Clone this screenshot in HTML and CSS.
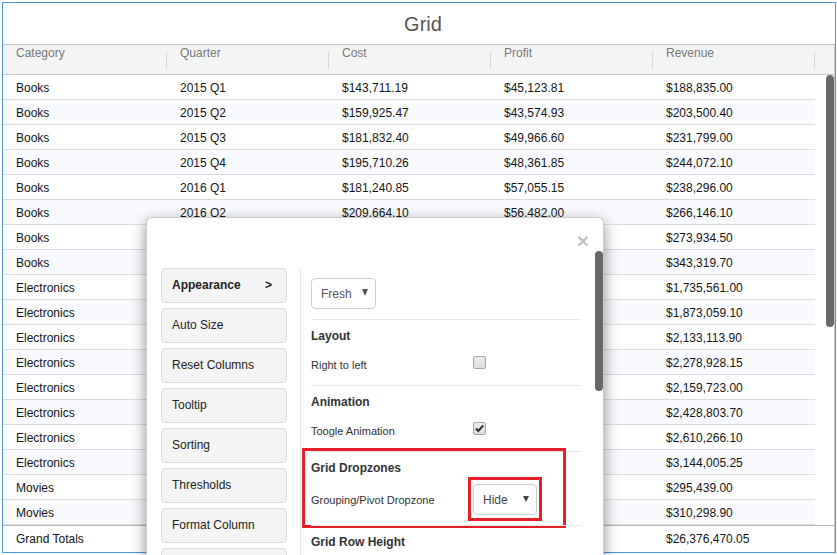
FILE: index.html
```html
<!DOCTYPE html>
<html>
<head>
<meta charset="utf-8">
<link rel="stylesheet" href="styles.css">
</head>
<body>
<div class="panel">
  <div class="title">Grid</div>
  <div class="grid">
    <div class="head">
      <div class="hcell c1">Category</div>
      <div class="hcell">Quarter</div>
      <div class="hcell">Cost</div>
      <div class="hcell">Profit</div>
      <div class="hcell">Revenue</div>
      <div class="hgut"></div>
    </div>
    <div class="body">
      <div class="rows">
        <div class="row"><div class="cell c1">Books</div><div class="cell">2015 Q1</div><div class="cell">$143,711.19</div><div class="cell">$45,123.81</div><div class="cell">$188,835.00</div></div>
        <div class="row"><div class="cell c1">Books</div><div class="cell">2015 Q2</div><div class="cell">$159,925.47</div><div class="cell">$43,574.93</div><div class="cell">$203,500.40</div></div>
        <div class="row"><div class="cell c1">Books</div><div class="cell">2015 Q3</div><div class="cell">$181,832.40</div><div class="cell">$49,966.60</div><div class="cell">$231,799.00</div></div>
        <div class="row"><div class="cell c1">Books</div><div class="cell">2015 Q4</div><div class="cell">$195,710.26</div><div class="cell">$48,361.85</div><div class="cell">$244,072.10</div></div>
        <div class="row"><div class="cell c1">Books</div><div class="cell">2016 Q1</div><div class="cell">$181,240.85</div><div class="cell">$57,055.15</div><div class="cell">$238,296.00</div></div>
        <div class="row"><div class="cell c1">Books</div><div class="cell">2016 Q2</div><div class="cell">$209,664.10</div><div class="cell">$56,482.00</div><div class="cell">$266,146.10</div></div>
        <div class="row"><div class="cell c1">Books</div><div class="cell">2016 Q3</div><div class="cell">$214,212.30</div><div class="cell">$59,722.20</div><div class="cell">$273,934.50</div></div>
        <div class="row"><div class="cell c1">Books</div><div class="cell">2016 Q4</div><div class="cell">$268,514.10</div><div class="cell">$74,805.60</div><div class="cell">$343,319.70</div></div>
        <div class="row"><div class="cell c1">Electronics</div><div class="cell">2015 Q1</div><div class="cell">$1,352,110.40</div><div class="cell">$383,450.60</div><div class="cell">$1,735,561.00</div></div>
        <div class="row"><div class="cell c1">Electronics</div><div class="cell">2015 Q2</div><div class="cell">$1,460,986.20</div><div class="cell">$412,072.90</div><div class="cell">$1,873,059.10</div></div>
        <div class="row"><div class="cell c1">Electronics</div><div class="cell">2015 Q3</div><div class="cell">$1,663,828.85</div><div class="cell">$469,285.05</div><div class="cell">$2,133,113.90</div></div>
        <div class="row"><div class="cell c1">Electronics</div><div class="cell">2015 Q4</div><div class="cell">$1,777,563.95</div><div class="cell">$501,364.20</div><div class="cell">$2,278,928.15</div></div>
        <div class="row"><div class="cell c1">Electronics</div><div class="cell">2016 Q1</div><div class="cell">$1,684,583.95</div><div class="cell">$475,139.05</div><div class="cell">$2,159,723.00</div></div>
        <div class="row"><div class="cell c1">Electronics</div><div class="cell">2016 Q2</div><div class="cell">$1,894,466.90</div><div class="cell">$534,336.80</div><div class="cell">$2,428,803.70</div></div>
        <div class="row"><div class="cell c1">Electronics</div><div class="cell">2016 Q3</div><div class="cell">$2,036,007.55</div><div class="cell">$574,258.55</div><div class="cell">$2,610,266.10</div></div>
        <div class="row"><div class="cell c1">Electronics</div><div class="cell">2016 Q4</div><div class="cell">$2,452,323.90</div><div class="cell">$691,681.35</div><div class="cell">$3,144,005.25</div></div>
        <div class="row"><div class="cell c1">Movies</div><div class="cell">2015 Q1</div><div class="cell">$230,442.40</div><div class="cell">$64,996.60</div><div class="cell">$295,439.00</div></div>
        <div class="row"><div class="cell c1">Movies</div><div class="cell">2015 Q2</div><div class="cell">$242,033.15</div><div class="cell">$68,265.75</div><div class="cell">$310,298.90</div></div>
      </div>
      <div class="gutter"><div class="thumb"></div></div>
    </div>
    <div class="foot">
      <div class="cell c1">Grand Totals</div><div class="cell"></div><div class="cell"></div><div class="cell"></div><div class="cell">$26,376,470.05</div>
    </div>
  </div>
</div>

<div class="modal">
  <div class="modal-head"><span class="close">×</span></div>
  <div class="modal-body">
    <div class="side">
      <div class="btn active"><span>Appearance</span><span>&gt;</span></div>
      <div class="btn">Auto Size</div>
      <div class="btn">Reset Columns</div>
      <div class="btn">Tooltip</div>
      <div class="btn">Sorting</div>
      <div class="btn">Thresholds</div>
      <div class="btn">Format Column</div>
      <div class="btn">Export</div>
    </div>
    <div class="content">
      <div class="select sel-fresh"><span>Fresh</span><svg width="6" height="7" viewBox="0 0 6 7"><polygon points="0,0 6,0 3,7" fill="#555"/></svg></div>
      <div class="section">
        <div class="sec-title">Layout</div>
        <div class="opt"><span class="lbl">Right to left</span><span class="check"></span></div>
      </div>
      <div class="section">
        <div class="sec-title">Animation</div>
        <div class="opt"><span class="lbl">Toogle Animation</span><span class="check"><svg width="11" height="11" viewBox="0 0 11 11"><path d="M2 5.6 L4.4 8 L9.2 2.4" fill="none" stroke="#333" stroke-width="2.2"/></svg></span></div>
      </div>
      <div class="section marked">
        <span class="annot annot-outer"></span>
        <div class="sec-title">Grid Dropzones</div>
        <div class="opt opt-sel"><span class="lbl">Grouping/Pivot Dropzone</span>
          <div class="sel-wrap"><span class="annot annot-inner"></span><div class="select sel-hide"><span>Hide</span><svg width="6" height="6" viewBox="0 0 6 6"><polygon points="0,0 6,0 3,6" fill="#444"/></svg></div></div>
        </div>
      </div>
      <div class="section">
        <div class="sec-title">Grid Row Height</div>
      </div>
    </div>
  </div>
  <div class="mscroll"></div>
</div>
</body>
</html>
```
FILE: styles.css
```css
html, body {
  margin: 0;
  padding: 0;
  overflow: hidden;
  background: #fff;
  font-family: "Liberation Sans", Arial, sans-serif;
}
.panel {
  margin: 2px 0 0 2px;
  width: 834px;
  height: 551px;
  box-sizing: border-box;
  border: 1px solid #4a93de;
  display: flex;
  flex-direction: column;
}
.title {
  height: 41px;
  line-height: 40px;
  text-align: center;
  font-size: 20px;
  color: #555;
  padding: 1px 0 0 8px;
  box-sizing: border-box;
}
.grid {
  width: 832px;
  border-right: 1px solid #c8c8c8;
  box-sizing: border-box;
  display: flex;
  flex-direction: column;
}
.head {
  display: flex;
  height: 31px;
  box-sizing: border-box;
  border-top: 1px solid #c4c4c4;
  border-bottom: 1px solid #c8c8c8;
  background: #f3f4f4;
}
.hcell {
  position: relative;
  width: 162px;
  box-sizing: border-box;
  padding: 1px 0 0 13px;
  line-height: 14px;
  font-size: 12px;
  color: #777;
}
.hcell.c1 { width: 164px; }
.hcell::after {
  content: "";
  position: absolute;
  right: 0;
  top: 7px;
  height: 17px;
  width: 1px;
  background: #d8d8d8;
}
.hgut { flex: 1; }
.body {
  display: flex;
  height: 450px;
}
.rows {
  width: 812px;
  display: flex;
  flex-direction: column;
}
.row {
  display: flex;
  height: 25px;
  box-sizing: border-box;
  border-bottom: 1px solid #dcdcdc;
}
.row:nth-child(even) { background: #f8fafd; }
.cell {
  width: 162px;
  box-sizing: border-box;
  padding: 2px 0 0 13px;
  line-height: 22px;
  font-size: 12px;
  color: #151515;
  white-space: nowrap;
}
.cell.c1 { width: 164px; }
.gutter {
  flex: 1;
  padding: 0 0 0 11px;
}
.thumb {
  width: 8px;
  height: 252px;
  border-radius: 4px;
  background: #686868;
}
.foot {
  display: flex;
  height: 27px;
  box-sizing: border-box;
  border-top: 1px solid #b4b4b4;
}
.foot .cell { line-height: 23px; }

/* modal */
.modal {
  position: absolute;
  left: 146px;
  top: 217px;
  width: 458px;
  height: 380px;
  box-sizing: border-box;
  background: #fff;
  border: 1px solid rgba(0,0,0,0.2);
  border-radius: 6px;
  box-shadow: 0 5px 15px rgba(0,0,0,0.45);
}
.modal-head {
  height: 50px;
  position: relative;
}
.close {
  position: absolute;
  right: 14px;
  top: 13px;
  font-size: 21px;
  line-height: 20px;
  font-weight: bold;
  color: #c2c2c2;
}
.modal-body {
  display: flex;
  padding-left: 14px;
}
.side {
  width: 126px;
  display: flex;
  flex-direction: column;
  gap: 5px;
}
.btn {
  height: 35px;
  box-sizing: border-box;
  border: 1px solid #dcdcdc;
  border-radius: 4px;
  background: #f4f4f4;
  display: flex;
  align-items: center;
  justify-content: space-between;
  padding: 0 14px 1px 10px;
  font-size: 12px;
  color: #222;
}
.btn.active { font-weight: bold; }
.content {
  margin-left: 13px;
  border-left: 1px solid #e8e8e8;
  padding-left: 10px;
  width: 270px;
  height: 320px;
}
.select {
  display: flex;
  align-items: center;
  justify-content: space-between;
  box-sizing: border-box;
  height: 31px;
  border: 1px solid #cfcfcf;
  border-radius: 4px;
  padding: 0 7px 0 9px;
  font-size: 12px;
  color: #555;
  background: #fff;
}
.sel-fresh {
  width: 65px;
  margin: 10px 0 10px 0;
}
.sel-fresh svg { margin-top: -2px; }
.sel-hide { width: 64px; color: #444; }
.sel-hide svg { margin-top: -2px; }
.section {
  border-top: 1px solid #e8e8e8;
  padding: 8px 0 10px;
  position: relative;
}
.sec-title {
  font-size: 12px;
  font-weight: bold;
  line-height: 16px;
  color: #333;
}
.opt {
  display: flex;
  align-items: flex-start;
  margin-top: 11px;
  height: 20px;
  line-height: 20px;
  font-size: 11px;
  color: #333;
}
.lbl { width: 162px; }
.check {
  width: 13px;
  height: 13px;
  margin-top: 1px;
  box-sizing: border-box;
  border: 1px solid #a6a6a6;
  border-radius: 2px;
  background: linear-gradient(#ececec, #dedede);
  display: flex;
  align-items: center;
  justify-content: center;
}
.opt-sel {
  height: 31px;
  margin-top: 8px;
  align-items: center;
}
.sel-wrap { position: relative; }
.annot {
  position: absolute;
  border: 3px solid #e41f27;
  box-sizing: border-box;
  pointer-events: none;
}
.annot-outer {
  left: -9px;
  top: -4px;
  width: 264px;
  height: 80px;
}
.annot-inner {
  left: -5px;
  top: -7px;
  width: 74px;
  height: 44px;
}
.mscroll {
  position: absolute;
  right: 0;
  top: 33px;
  width: 8px;
  height: 140px;
  border-radius: 4px;
  background: #686868;
}
```
